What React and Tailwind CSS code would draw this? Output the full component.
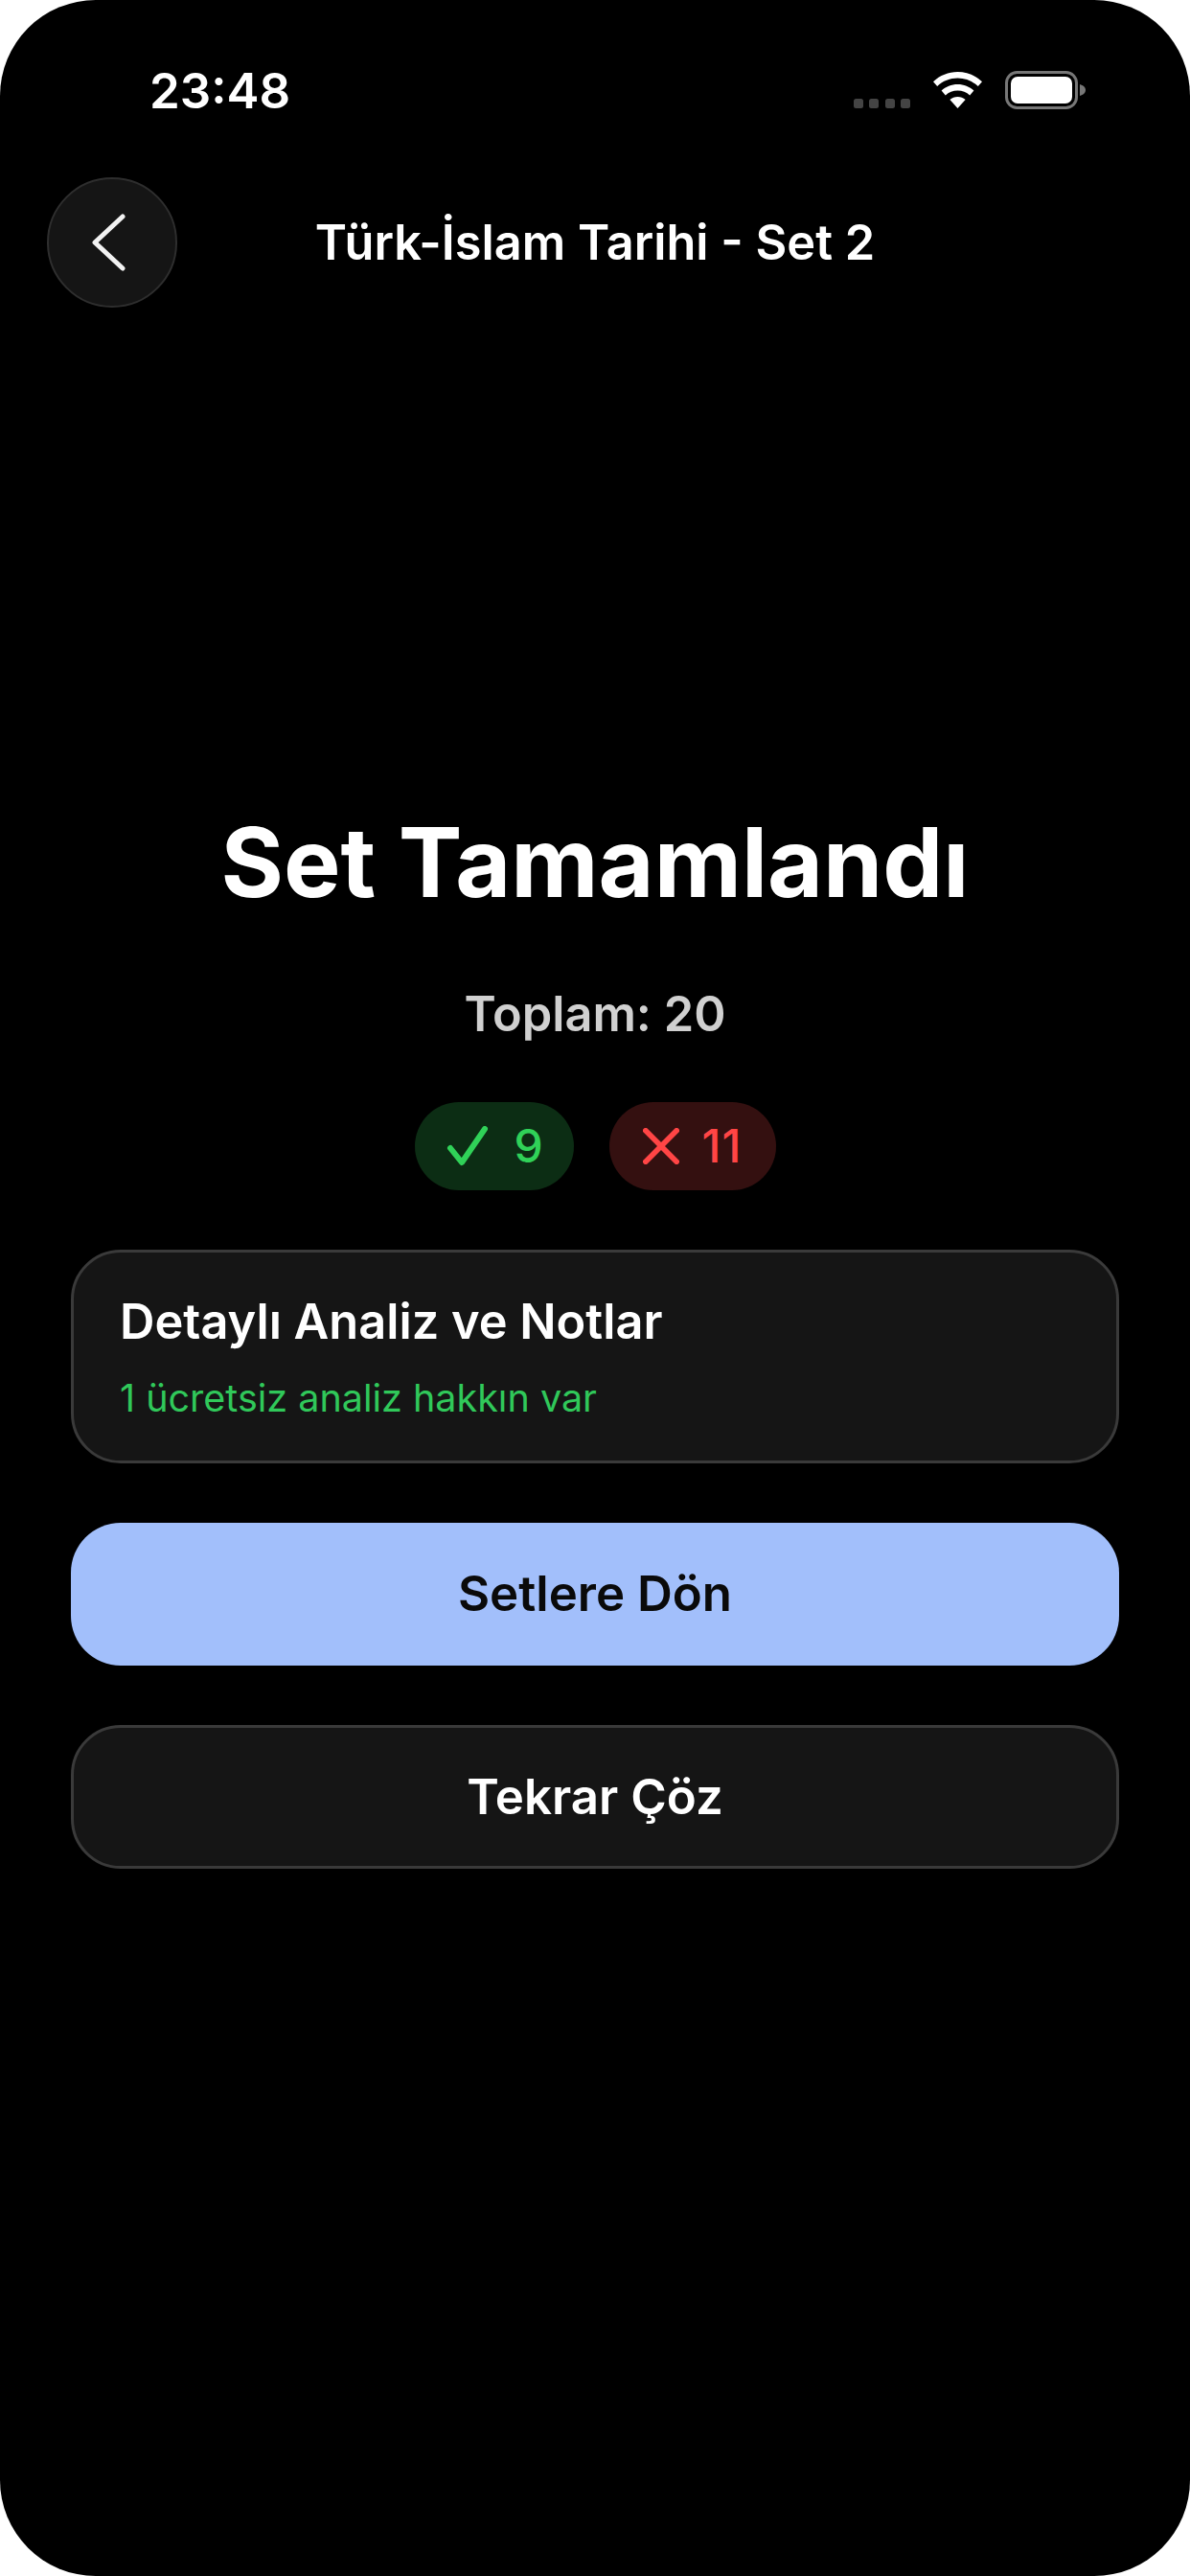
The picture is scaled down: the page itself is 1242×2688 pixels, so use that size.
const font = "font-['Inter','Noto_Sans',sans-serif]"

function Wifi() {
  return (
    <svg width="51" height="38" viewBox="0 0 51 38" fill="#fff">
      <path d="M25.5 0C35 0 44 3.7 51 10.2L46.8 15C41 9.6 33.5 6.6 25.5 6.6S10 9.6 4.2 15L0 10.2C7 3.7 16 0 25.5 0Z" />
      <path d="M25.5 13C32 13 37.8 15.4 42.4 19.6L38.2 24.4C34.8 21.3 30.4 19.6 25.5 19.6S16.2 21.3 12.8 24.4L8.6 19.6C13.2 15.4 19 13 25.5 13Z" />
      <path d="M25.5 26C28.6 26 31.3 27.1 33.6 29.1L25.5 38L17.4 29.1C19.7 27.1 22.4 26 25.5 26Z" />
    </svg>
  )
}

function Battery() {
  return (
    <svg width="84" height="40" viewBox="0 0 84 40">
      <rect x="1.5" y="1.5" width="73" height="37" rx="11" fill="none" stroke="#777" strokeWidth="3" />
      <rect x="6" y="6" width="64" height="28" rx="7" fill="#fff" />
      <path d="M78 14C81.5 15 84 17 84 20S81.5 25 78 26Z" fill="#777" />
    </svg>
  )
}

function StatusBar() {
  return (
    <div className="flex justify-between h-[185px] pl-[156px] pr-[109px]">
      <span className="mt-[66px] text-[51px] leading-[58px] font-semibold text-white">23:48</span>
      <div className="flex items-start gap-[24px] pt-[74px]">
        <div className="flex gap-[6.5px] mt-[29px]">
          <span className="w-[10px] h-[10px] rounded-[2.5px] bg-[#444]" />
          <span className="w-[10px] h-[10px] rounded-[2.5px] bg-[#444]" />
          <span className="w-[10px] h-[10px] rounded-[2.5px] bg-[#444]" />
          <span className="w-[10px] h-[10px] rounded-[2.5px] bg-[#444]" />
        </div>
        <div className="mt-[1px]">
          <Wifi />
        </div>
        <Battery />
      </div>
    </div>
  )
}

function Header() {
  return (
    <div className="grid grid-cols-[136px_1fr_136px] items-center px-[49px]">
      <button className="flex items-center justify-center w-[136px] h-[136px] rounded-full bg-[#151515] border-2 border-[#2e2e2e]">
        <svg width="36" height="60" viewBox="0 0 36 60" fill="none" stroke="#f2f2f2" strokeWidth="5" strokeLinecap="round" strokeLinejoin="round" className="-ml-[8px]">
          <path d="M33 3L4 30L33 57" />
        </svg>
      </button>
      <h2 className="text-center text-[50.5px] leading-[60px] font-semibold text-white">Türk-İslam Tarihi - Set 2</h2>
      <div />
    </div>
  )
}

function StatPills() {
  return (
    <div className="flex justify-center gap-[37px] mt-[62px]">
      <div className="flex items-center justify-center gap-[26px] pl-[2px] w-[166px] h-[92px] rounded-[46px] bg-[#0c2d14] text-[#30d158]">
        <svg width="44" height="42" viewBox="0 0 44 42" fill="none" stroke="currentColor" strokeWidth="6" strokeLinecap="round" strokeLinejoin="round">
          <path d="M4 23L16 38L40 3" />
        </svg>
        <span className="text-[48px] leading-[52px] font-medium">9</span>
      </div>
      <div className="flex items-center justify-center gap-[24px] w-[174px] h-[92px] rounded-[46px] bg-[#341010] text-[#ff4545]">
        <svg width="38" height="38" viewBox="0 0 40 40" fill="none" stroke="currentColor" strokeWidth="6" strokeLinecap="round">
          <path d="M3 3L37 37M37 3L3 37" />
        </svg>
        <span className="text-[48px] leading-[52px] font-medium tracking-[1px]">11</span>
      </div>
    </div>
  )
}

export default function App() {
  return (
    <div className="w-[1242px] h-[2688px] bg-white">
      <div className={`h-full rounded-[100px] bg-black overflow-hidden ${font}`}>
        <StatusBar />
        <Header />

        <div className="flex flex-col items-center mt-[517px]">
          <h1 className="text-[100px] leading-[124px] font-bold text-white">Set Tamamlandı</h1>
          <p className="mt-[66px] text-[50.5px] leading-[60px] font-semibold text-[#d0d0d0]">Toplam: 20</p>
        </div>

        <StatPills />

        <div className="flex flex-col gap-[62px] mt-[62px] px-[74px]">
          <div className="flex flex-col justify-center h-[223px] px-[48px] rounded-[52px] bg-[#151515] border-[3px] border-[#3a3a3a]">
            <p className="text-[50.5px] leading-[60px] font-semibold text-white">Detaylı Analiz ve Notlar</p>
            <p className="mt-[26px] text-[39.5px] leading-[48px] text-[#30c85a]">1 ücretsiz analiz hakkın var</p>
          </div>
          <button className="h-[149px] rounded-[52px] bg-[#a2bffb] text-[51px] font-semibold text-[#0a0a0a]">Setlere Dön</button>
          <button className="h-[150px] rounded-[52px] bg-[#151515] border-[3px] border-[#3a3a3a] text-[51px] font-semibold text-white">Tekrar Çöz</button>
        </div>
      </div>
    </div>
  )
}
